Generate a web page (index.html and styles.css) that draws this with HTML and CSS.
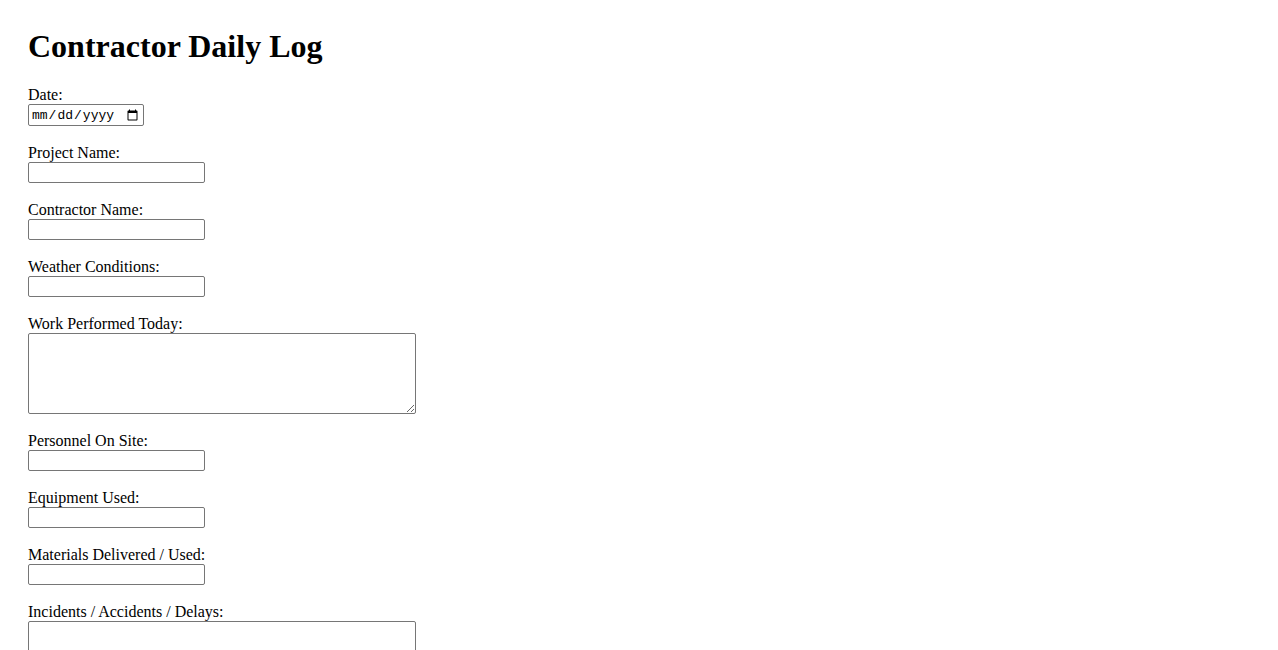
FILE: index.html
```html
<!DOCTYPE html>
<html>
<head>
<meta charset="utf-8">
<title>Contractor Daily Log</title>
<link rel="stylesheet" href="styles.css">
</head>
<body>
<main class="page">
  <h1 class="title">Contractor Daily Log</h1>
  <form class="log-form">
    <div class="field">
      <label class="label" for="date">Date:</label>
      <input class="control control-date" type="date" id="date">
    </div>
    <div class="field">
      <label class="label" for="project">Project Name:</label>
      <input class="control control-text" type="text" id="project">
    </div>
    <div class="field">
      <label class="label" for="contractor">Contractor Name:</label>
      <input class="control control-text" type="text" id="contractor">
    </div>
    <div class="field">
      <label class="label" for="weather">Weather Conditions:</label>
      <input class="control control-text" type="text" id="weather">
    </div>
    <div class="field">
      <label class="label" for="work">Work Performed Today:</label>
      <textarea class="control control-area" id="work"></textarea>
    </div>
    <div class="field">
      <label class="label" for="personnel">Personnel On Site:</label>
      <input class="control control-text" type="text" id="personnel">
    </div>
    <div class="field">
      <label class="label" for="equipment">Equipment Used:</label>
      <input class="control control-text" type="text" id="equipment">
    </div>
    <div class="field">
      <label class="label" for="materials">Materials Delivered / Used:</label>
      <input class="control control-text" type="text" id="materials">
    </div>
    <div class="field">
      <label class="label" for="incidents">Incidents / Accidents / Delays:</label>
      <textarea class="control control-area" id="incidents"></textarea>
    </div>
  </form>
</main>
</body>
</html>
```

FILE: styles.css
```css
html, body {
  margin: 0;
  padding: 0;
  background: #ffffff;
}

body {
  font-family: "Liberation Serif", "Times New Roman", serif;
  font-size: 16px;
  color: #000000;
}

.page {
  padding: 28px 28px 40px 28px;
}

.title {
  font-size: 32px;
  font-weight: bold;
  line-height: 36px;
  margin: 0 0 22px 0;
}

.log-form {
  display: flex;
  flex-direction: column;
  align-items: flex-start;
}

.field {
  display: flex;
  flex-direction: column;
  align-items: flex-start;
  margin-bottom: 18px;
}

.label {
  display: block;
  line-height: 18px;
  margin: 0;
}

.control {
  box-sizing: border-box;
  margin: 0;
  border: 1px solid #767676;
  border-radius: 2px;
  background: #ffffff;
  font-size: 13.333px;
}

.control-text {
  width: 177px;
  height: 21px;
  padding: 1px 2px;
  font-family: "Liberation Sans", Arial, sans-serif;
}

.control-date {
  width: 116px;
  height: 22px;
  padding: 1px 2px;
  font-family: "Liberation Mono", "DejaVu Sans Mono", monospace;
  font-size: 13px;
}

.control-area {
  width: 388px;
  height: 81px;
  padding: 2px;
  font-family: "Liberation Mono", monospace;
  resize: both;
}
```
